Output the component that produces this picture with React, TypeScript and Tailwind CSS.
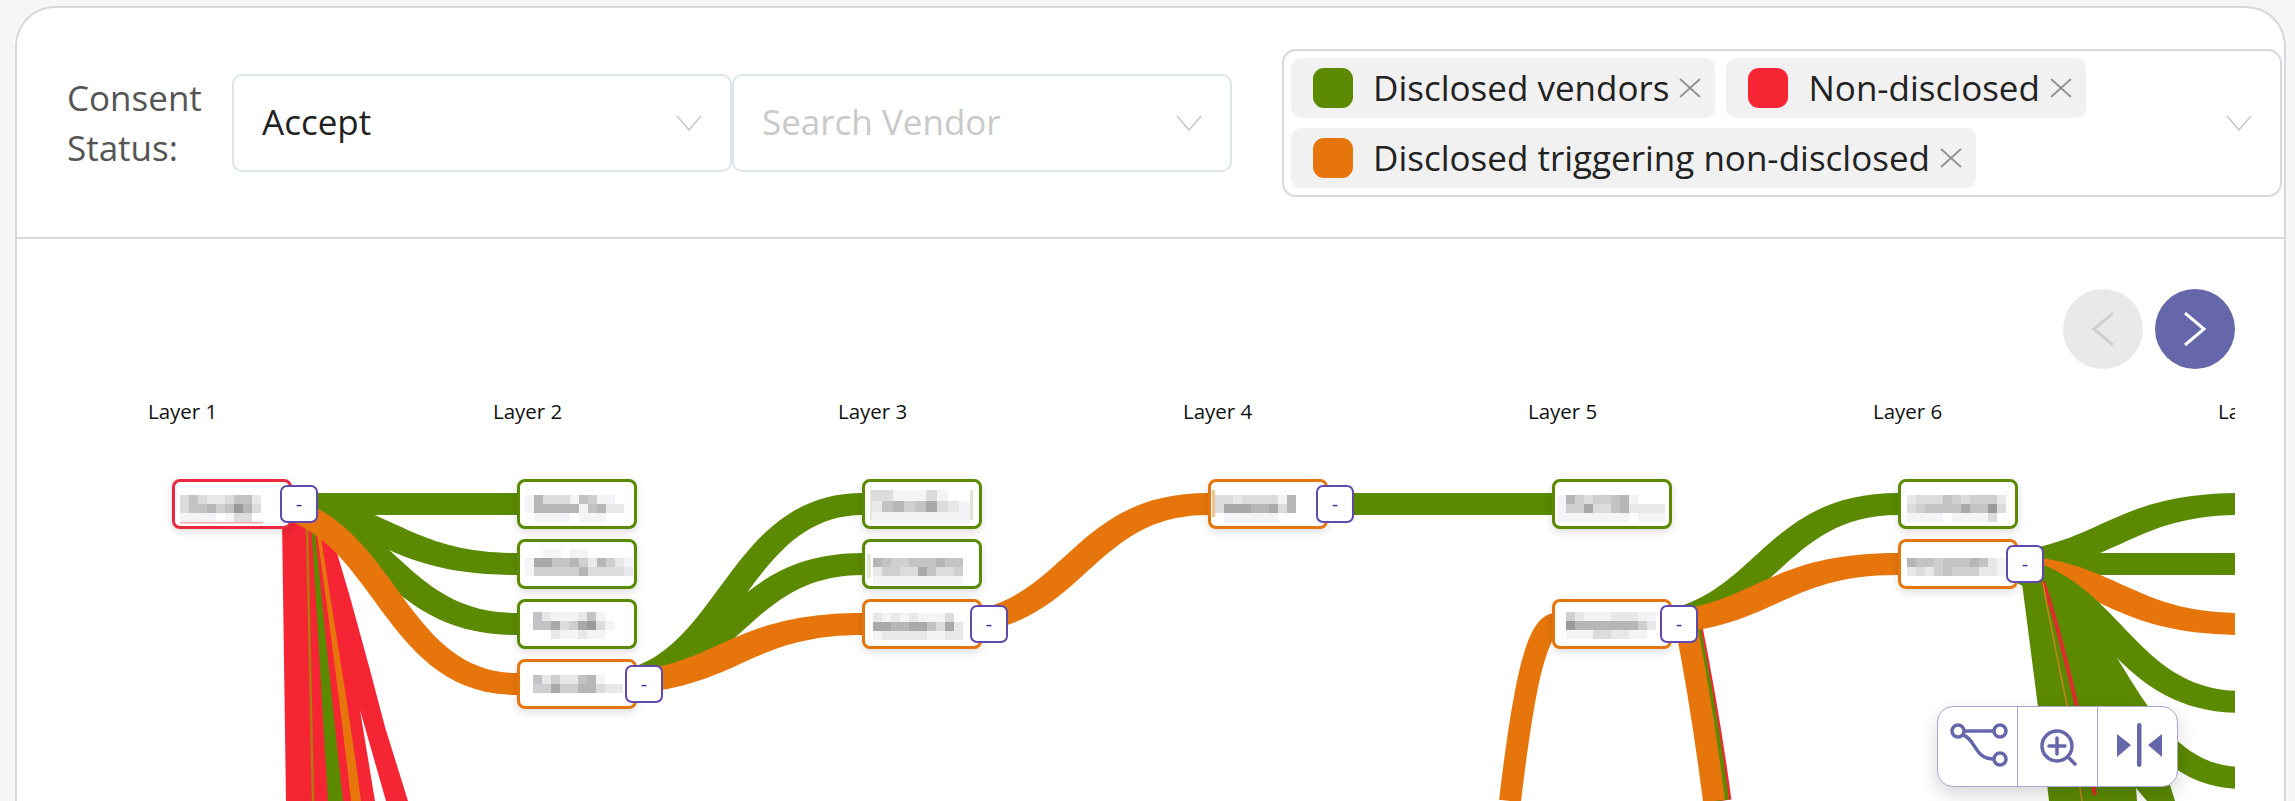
const GREEN = "#5b8a00"
const RED = "#f52533"
const ORANGE = "#e6760b"

const shades: Record<string, string> = {
    "0": "#ffffff",
    "1": "#f4f4f6",
    "2": "#e8e8ea",
    "3": "#dcdcde",
    "4": "#cfcfd2",
    "5": "#c3c3c5",
    "6": "#b6b6b8",
    "7": "#a9a9ab",
    "8": "#9a9a9c",
}

type Kind = "green" | "red" | "orange"

type Extra = { x: number; y: number; w: number; h: number; color: string }

type VendorNode = {
    x: number
    y: number
    kind: Kind
    toggle?: boolean
    ox: number
    oy: number
    tile?: number
    rows: string[]
    extras?: Extra[]
}

const nodeBorder: Record<Kind, string> = {
    green: "border-[#5b8a00]",
    red: "border-[#ea2a3c]",
    orange: "border-[#e6760b]",
}

const layers = [148, 493, 838, 1183, 1528, 1873, 2218]

const nodes: VendorNode[] = [
    { x: 172, y: 479, kind: "red", toggle: true, ox: 5, oy: 13, rows: ["353223552", "355645863", "111101330"], extras: [{ x: 5, y: 40, w: 83, h: 1.5, color: "#f3a9b0" }] },
    { x: 517, y: 479, kind: "green", ox: 5, oy: 13, rows: ["163331541100", "166666156220", "011110111000"] },
    { x: 517, y: 539, kind: "green", ox: 5, oy: 7, rows: ["001101100000", "177556426421", "144444633332"] },
    { x: 517, y: 599, kind: "green", ox: 13, oy: 10, rows: ["5211125100", "5573478310", "0021121100"] },
    { x: 517, y: 659, kind: "orange", toggle: true, ox: 13, oy: 13, rows: ["5242256100", "4474466322", "0000000000"] },
    { x: 862, y: 479, kind: "green", ox: 6, oy: 8, tile: 11, rows: ["331113100", "256457321", "111111111"], extras: [{ x: 5, y: 8, w: 1.5, h: 30, color: "#dfe6d0" }, { x: 105, y: 8, w: 3, h: 30, color: "#dfe6d0" }] },
    { x: 862, y: 539, kind: "green", ox: 8, oy: 16, rows: ["6544555655", "2443375334", "1111111111"], extras: [{ x: 2, y: 12, w: 4, h: 24, color: "#e4ead8" }] },
    { x: 862, y: 599, kind: "orange", toggle: true, ox: 8, oy: 11, rows: ["2121211130", "7766775372", "1222221122"] },
    { x: 1208, y: 479, kind: "orange", toggle: true, ox: 4, oy: 13, rows: ["332333316", "377766736", "011111100"], extras: [{ x: 1, y: 8, w: 3, h: 27, color: "#f4c190" }] },
    { x: 1552, y: 479, kind: "green", ox: 2, oy: 13, rows: ["164344561000", "144733562222", "111111110111"] },
    { x: 1552, y: 599, kind: "orange", toggle: true, ox: 11, oy: 10, rows: ["4211122211", "8666666642", "1113322110"] },
    { x: 1898, y: 479, kind: "green", ox: 6, oy: 13, rows: ["23335434442", "34555575583", "11110111130"] },
    { x: 1898, y: 539, kind: "orange", toggle: true, ox: 6, oy: 16, rows: ["65545556521", "23245444221"] },
]

// band between two nodes, a bit fatter on its slope than a plain stroke
function ribbon(x0: number, y0: number, x1: number, y1: number) {
    const mid = (x0 + x1) / 2
    const skew = y1 === y0 ? 0 : y1 > y0 ? 10 : -10
    const top = `M${x0} ${y0 - 11} C${mid + skew} ${y0 - 11} ${mid + skew} ${y1 - 11} ${x1} ${y1 - 11}`
    const bottom = `L${x1} ${y1 + 11} C${mid - skew} ${y1 + 11} ${mid - skew} ${y0 + 11} ${x0} ${y0 + 11} Z`
    return `${top} ${bottom}`
}

const links: { d: string; color: string }[] = [
    // layer 1 > 2
    { d: ribbon(253, 504, 517, 504), color: GREEN },
    { d: ribbon(253, 504, 517, 564), color: GREEN },
    { d: ribbon(253, 504, 517, 624), color: GREEN },
    { d: ribbon(253, 504, 517, 684), color: ORANGE },
    // layer 2 > 3
    { d: ribbon(598, 684, 863, 504), color: GREEN },
    { d: ribbon(598, 684, 863, 564), color: GREEN },
    { d: ribbon(598, 684, 863, 624), color: ORANGE },
    // layer 3 > 4 > 5
    { d: ribbon(944, 624, 1208, 504), color: ORANGE },
    { d: ribbon(1289, 504, 1553, 504), color: GREEN },
    // layer 5 > 6
    { d: ribbon(1634, 624, 1898, 504), color: GREEN },
    { d: ribbon(1634, 624, 1898, 564), color: ORANGE },
    // layer 6 > 7
    { d: ribbon(1979, 564, 2243, 504), color: GREEN },
    { d: ribbon(1979, 564, 2243, 564), color: GREEN },
    { d: ribbon(1979, 564, 2243, 624), color: ORANGE },
    { d: ribbon(1979, 564, 2243, 702), color: GREEN },
    { d: ribbon(1979, 564, 2243, 778), color: GREEN },
]

function Chevron() {
    return (
        <svg width="26" height="16" viewBox="0 0 26 16" fill="none" className="shrink-0">
            <path d="M1 1 L13 15 L25 1" stroke="#c5c9cd" strokeWidth="1.6" />
        </svg>
    )
}

function Select({ value, placeholder }: { value?: string; placeholder?: string }) {
    return (
        <div className="flex h-[98px] w-[500px] items-center justify-between rounded-[10px] border-2 border-[#dce6ea] bg-white pl-[28px] pr-[28px]">
            {value ? <span className="text-[#222222]">{value}</span> : <span className="text-[#c9c9c9]">{placeholder}</span>}
            <Chevron />
        </div>
    )
}

function Chip({ color, label }: { color: string; label: string }) {
    return (
        <div className="flex h-[60px] items-center rounded-[10px] bg-[#f1f1f1] pl-[22px] pr-[14px]">
            <span className="h-10 w-10 rounded-[11px]" style={{ backgroundColor: color }} />
            <span className="ml-[20px] pt-[1px] text-[#222222]">{label}</span>
            <svg className="ml-[10px]" width="22" height="20" viewBox="0 0 22 20" fill="none">
                <path d="M1 1 L21 19 M21 1 L1 19" stroke="#919191" strokeWidth="1.8" />
            </svg>
        </div>
    )
}

function Mosaic({ node }: { node: VendorNode }) {
    const tile = node.tile ?? 9
    return (
        <svg className="absolute left-0 top-0 blur-[0.4px]" width="114" height="44" viewBox="0 0 114 44">
            {node.rows.map((row, r) =>
                row.split("").map((c, i) => (
                    <rect key={`${r}-${i}`} x={node.ox + i * tile} y={node.oy + r * tile} width={tile} height={tile} fill={shades[c]} />
                )),
            )}
            {node.extras?.map((e, i) => (
                <rect key={i} x={e.x} y={e.y} width={e.w} height={e.h} fill={e.color} />
            ))}
        </svg>
    )
}

function Node({ node }: { node: VendorNode }) {
    return (
        <div
            className={`absolute h-[50px] w-[120px] rounded-[8px] border-[3px] bg-white shadow-[0_3px_8px_rgba(0,0,0,0.14)] ${nodeBorder[node.kind]}`}
            style={{ left: node.x, top: node.y }}
        >
            <Mosaic node={node} />
            {node.toggle && (
                <div className="absolute left-[105px] top-[3px] flex h-[38px] w-[38px] items-center justify-center rounded-[7px] border-2 border-[#6148ad] bg-white text-[20px] font-medium text-[#3f2d9c]">
                    -
                </div>
            )}
        </div>
    )
}

function RouteIcon() {
    return (
        <svg width="80" height="81" viewBox="0 0 80 81" fill="none" stroke="#6667ab" strokeWidth="3.5">
            <circle cx="20" cy="24" r="6" />
            <circle cx="62" cy="24" r="6" />
            <circle cx="62" cy="52" r="6" />
            <path d="M26 24 H56" />
            <path d="M25 28 C38 32 36 52 56 52" />
        </svg>
    )
}

function ZoomIcon() {
    return (
        <svg width="80" height="81" viewBox="0 0 80 81" fill="none" stroke="#6667ab" strokeWidth="3.5" strokeLinecap="round">
            <circle cx="39" cy="39" r="15" />
            <path d="M31 39 H47 M39 31 V47" />
            <path d="M50 50 L57 57" />
        </svg>
    )
}

function CollapseIcon() {
    return (
        <svg width="80" height="81" viewBox="0 0 80 81" fill="#6667ab">
            <rect x="39" y="16" width="4.5" height="44" rx="2.25" />
            <path d="M19 27 L33 38 L19 50 Z" />
            <path d="M64 27 L50 38 L64 50 Z" />
        </svg>
    )
}

export default function App() {
    return (
        <div className="h-[801px] overflow-hidden bg-[#f6f6f6] pl-[15px] pr-[9px] pt-[6px] font-['Open_Sans',sans-serif] text-[35px]">
            <div className="flex h-[795px] flex-col overflow-hidden rounded-t-[40px] border-2 border-b-0 border-[#d6d8db] bg-white">
                {/* Filters */}
                <div className="flex h-[231px] shrink-0 items-center border-b-2 border-[#d6d8dc] pl-[50px]">
                    <div className="w-[165px] leading-[50px] text-[#555555]">
                        Consent
                        <br />
                        Status:
                    </div>
                    <Select value="Accept" />
                    <Select placeholder="Search Vendor" />
                    <div className="ml-[50px] flex h-[148px] w-[1000px] shrink-0 items-center justify-between rounded-[14px] border-2 border-[#d6d8dc] bg-white pl-[7px] pr-[28px]">
                        <div className="flex w-[900px] flex-wrap gap-x-[11px] gap-y-[10px]">
                            <Chip color={GREEN} label="Disclosed vendors" />
                            <Chip color={RED} label="Non-disclosed" />
                            <Chip color={ORANGE} label="Disclosed triggering non-disclosed" />
                        </div>
                        <Chevron />
                    </div>
                </div>

                {/* Chart */}
                <div className="relative flex-1 overflow-hidden">
                    <div className="absolute left-[-17px] top-[-239px] h-[801px] w-[2235px] overflow-hidden">
                        <svg className="absolute left-0 top-0" width="2235" height="801" viewBox="0 0 2235 801" fill="none">
                            {/* layer 1 fan going down */}
                            <path d="M282 520 L286 801 L375 801 L360 710 L386 801 L408 801 L385 727 L370 670 L350 597 L337 553 L318 515 Z" fill={RED} />
                            <path d="M307 525 L313 801" stroke="#b3790f" strokeWidth="2.5" />
                            <path d="M311 522 L314 522 C322 600 332 700 343 801 L328 801 C322 700 316 600 311 522 Z" fill={GREEN} />
                            <path d="M315 520 L318.5 520 C330 600 348 700 361 801 L351 801 C340 700 325 590 315 520 Z" fill={ORANGE} />
                            {/* layer 4 to 5, and what leaves layer 5 downwards */}
                            <path d="M1556 624 C1535 624 1522 700 1510 801" stroke={ORANGE} strokeWidth="22" />
                            <path d="M1690 620 C1698 660 1711 730 1720.5 801" stroke={RED} strokeWidth="22" />
                            <path d="M1688 620 C1696 660 1709 730 1718 801" stroke={GREEN} strokeWidth="22" />
                            <path d="M1685 620 C1693 660 1705 730 1714 801" stroke={ORANGE} strokeWidth="22" />
                            {links.map((l, i) => (
                                <path key={i} d={l.d} fill={l.color} />
                            ))}
                            {/* layer 6 fan going down */}
                            <path d="M2022 583 L2038 707 L2049 801 L2137 801 L2136 788 L2147 801 L2175 801 L2150 720 L2103 643 L2050 570 Z" fill={GREEN} />
                            <path d="M2043 582 C2057 620 2068 670 2077 707 L2095 795" stroke="#df2c2c" strokeWidth="4" />
                            <path d="M2043 583 C2050 625 2060 670 2067 705 L2082 801" stroke="#c8851a" strokeWidth="1.5" />
                        </svg>

                        {layers.map((x, i) => (
                            <div key={i} className="absolute top-[397px] whitespace-nowrap text-[20.5px] leading-[28px] text-[#111111]" style={{ left: x }}>
                                Layer {i + 1}
                            </div>
                        ))}

                        {nodes.map((n, i) => (
                            <Node key={i} node={n} />
                        ))}

                        {/* Chart tools */}
                        <div className="absolute left-[1937px] top-[706px] flex h-[81px] w-[241px] divide-x divide-[#a9a9d0] overflow-hidden rounded-[16px] border border-[#a9a9d0] bg-white shadow-[0_8px_20px_rgba(0,0,0,0.16)]">
                            <div className="w-[80px]">
                                <RouteIcon />
                            </div>
                            <div className="w-[80px]">
                                <ZoomIcon />
                            </div>
                            <div className="w-[80px]">
                                <CollapseIcon />
                            </div>
                        </div>
                    </div>

                    {/* Pager */}
                    <div className="relative flex justify-end gap-3 pr-[49px] pt-[50px]">
                        <button className="flex h-20 w-20 items-center justify-center rounded-full bg-[#e9e9e9]">
                            <svg width="24" height="34" viewBox="0 0 24 34" fill="none">
                                <path d="M22 1 L3 17 L22 33" stroke="#cfcfcf" strokeWidth="3" />
                            </svg>
                        </button>
                        <button className="flex h-20 w-20 items-center justify-center rounded-full bg-[#6667ab]">
                            <svg width="24" height="34" viewBox="0 0 24 34" fill="none">
                                <path d="M2 1 L21 17 L2 33" stroke="#ffffff" strokeWidth="3" />
                            </svg>
                        </button>
                    </div>
                </div>
            </div>
        </div>
    )
}
